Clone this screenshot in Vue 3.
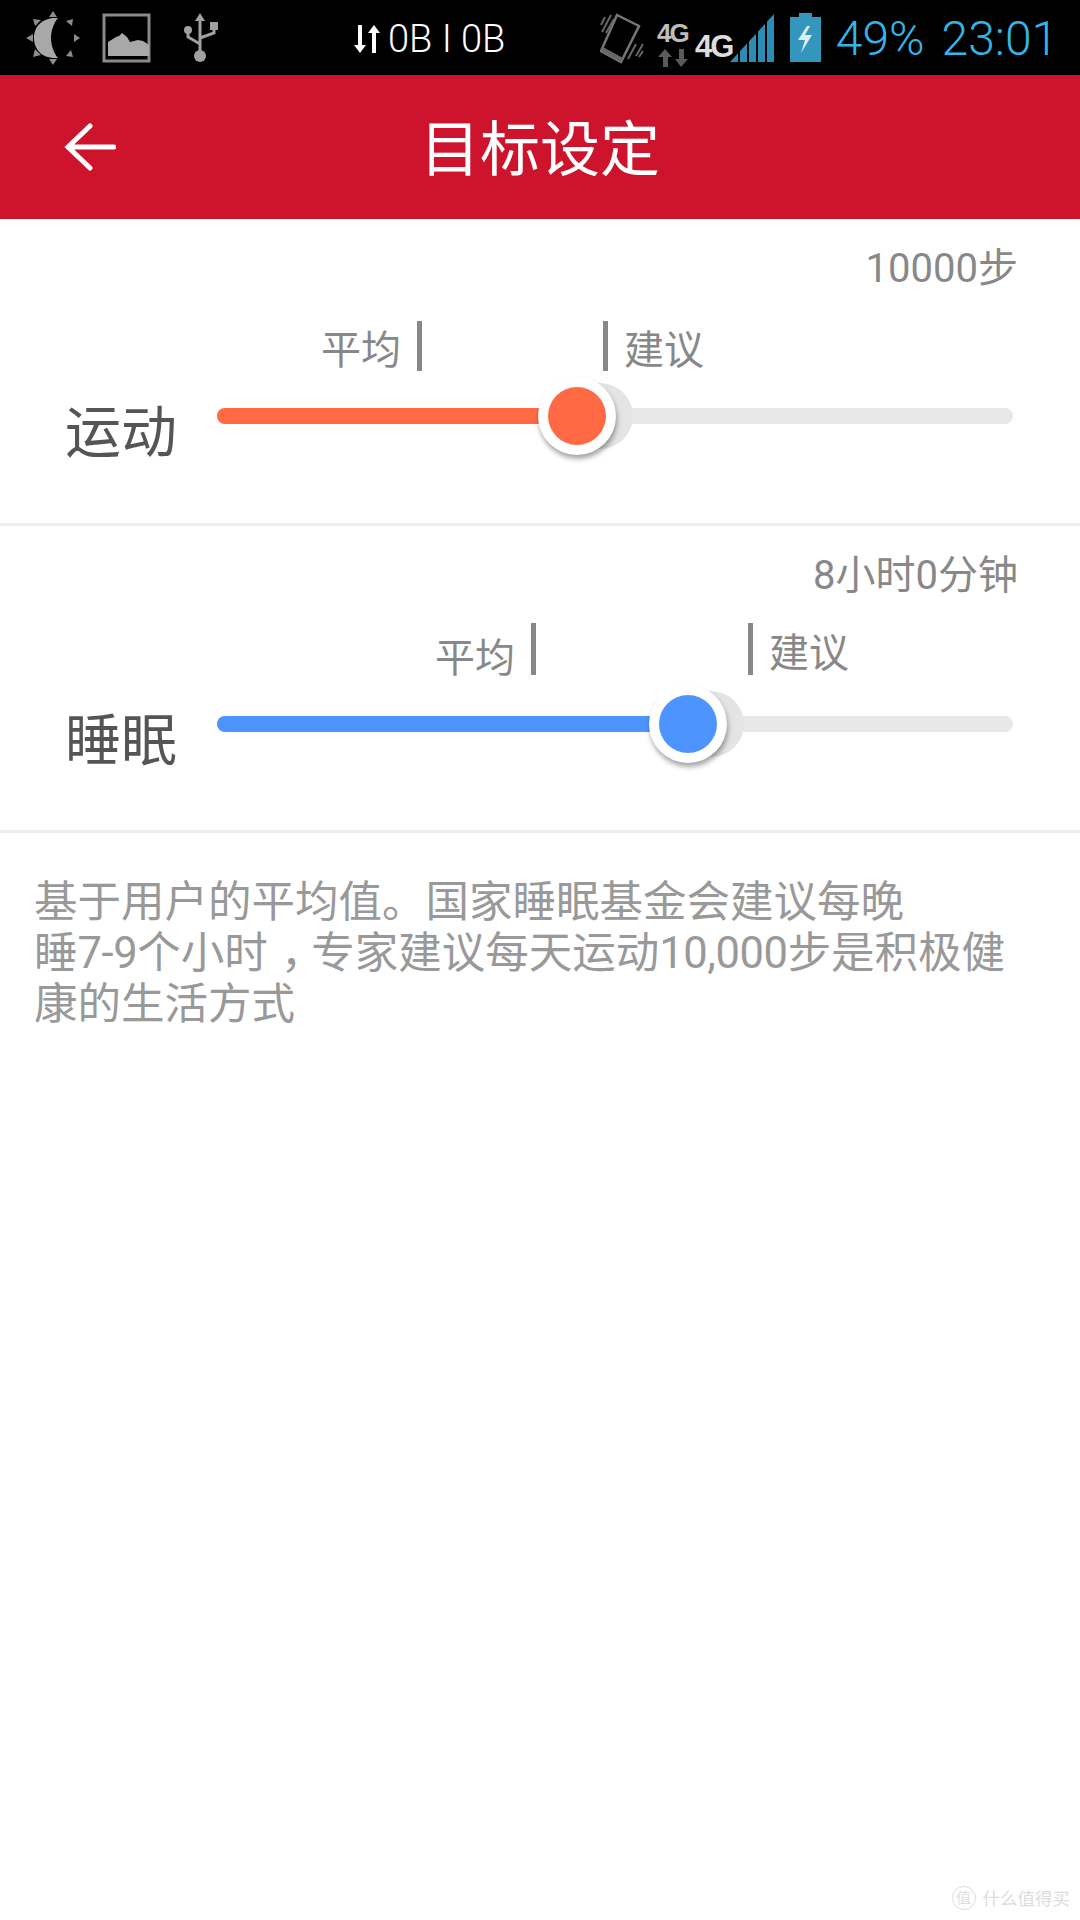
<script setup>
const sliders = [
  { name: '运动', value: '10000步', color: '#ff6a45', pos: 360, avg: 200, rec: 385, marksTop: 32, marksHeight: 50, marksGapBottom: 37, avgDrop: 9, recDrop: 9 },
  { name: '睡眠', value: '8小时0分钟', color: '#4d94ff', pos: 471, avg: 314, rec: 530, marksTop: 27, marksHeight: 52, marksGapBottom: 41, avgDrop: 15, recDrop: 10 }
]
</script>

<template>
  <div class="page">
    <div class="status">
      <div class="left-icons">
        <svg class="ic-sun" width="54" height="54" viewBox="0 0 54 54">
          <path d="M32 7C18 6 8 14 8 27s10 21 24 20c-5-6-7-14-7-20s2-14 7-20z" fill="#a8a8a8" />
          <g fill="#8c8c8c">
            <path d="M27 0l4 6h-8zM27 54l-4-6h8zM0 27l7-4v8zM54 27l-6 4v-8z" />
            <path d="M7 8l8 1-6 6zM47 8l-1 7-6-5zM7 46l2-8 6 6zM47 46l-7-1 5-6z" />
          </g>
        </svg>
        <svg class="ic-img" width="49" height="50" viewBox="0 0 49 50">
          <rect x="2" y="2" width="45" height="46" fill="none" stroke="#8a8a8a" stroke-width="3" />
          <path d="M6 43V29l8-5 3-1 3-3 5 4 3 5 8-2 5 1 6 4v11z" fill="#a8a8a8" />
        </svg>
        <svg class="ic-usb" width="34" height="50" viewBox="0 0 34 50">
          <g stroke="#a0a0a0" stroke-width="3" fill="none">
            <path d="M16 6v34M4 18v6l12 7M30 13v7l-14 5" />
          </g>
          <path d="M16 0l5 8H11z" fill="#a0a0a0" />
          <circle cx="4" cy="17" r="4" fill="#a0a0a0" />
          <rect x="26" y="9" width="8" height="8" fill="#a0a0a0" />
          <circle cx="16" cy="43" r="6" fill="#a0a0a0" />
        </svg>
      </div>
      <div class="net">
        <svg width="26" height="28" viewBox="0 0 26 28">
          <path d="M4 0h4v20h4l-6 8-6-8h4zM18 28h4V8h4l-6-8-6 8h4z" fill="#fff" />
        </svg>
        <span>0B I 0B</span>
      </div>
      <div class="right-icons">
        <svg class="ic-vib" width="46" height="52" viewBox="0 0 46 52">
          <path d="M17 3l22 11-18 36-20-11z" fill="none" stroke="#777" stroke-width="2.5" />
          <path d="M1 39l20 11 2-4-20-11z" fill="#666" />
          <g stroke="#666" stroke-width="2">
            <path d="M2 20L11 3M6 21L14 7M1 13l4-8M28 47l8-15M36 44l7-12M39 45l4-6" />
          </g>
        </svg>
        <div class="g-one">
          <span class="g-text">4G</span>
          <svg width="32" height="18" viewBox="0 0 32 18">
            <path d="M8 0l7 8h-4v10H6V8H1zM24 18l7-8h-4V0h-5v10h-4z" fill="#5a5a5a" />
          </svg>
        </div>
        <span class="g-text g-two">4G</span>
        <svg class="ic-sig" width="44" height="48" viewBox="0 0 44 48">
          <path d="M0 48L44 0v48z" fill="#2b8db5" />
          <g stroke="#000" stroke-width="2">
            <path d="M9 30v18M18 20v28M27 10v38M36 0v48" />
          </g>
        </svg>
        <svg class="ic-bat" width="31" height="49" viewBox="0 0 31 49">
          <path d="M9 0h13v4h9v45H0V4h9z" fill="#3596bd" />
          <path d="M17 13l-9 14h7l-4 13 11-18h-7l5-9z" fill="#dcecf3" />
        </svg>
        <span class="pct">49%</span>
        <span class="clock">23:01</span>
      </div>
    </div>

    <div class="header">
      <svg class="back" width="52" height="48" viewBox="0 0 52 48">
        <path d="M50 24H4M26 3L4 24l22 21" fill="none" stroke="#fff" stroke-width="5" stroke-linecap="round" />
      </svg>
      <h1 class="title">目标设定</h1>
    </div>

    <section v-for="s in sliders" :key="s.name" class="block">
      <div class="value">{{ s.value }}</div>
      <div class="marks" :style="{ marginTop: s.marksTop + 'px', height: s.marksHeight + 'px', marginBottom: s.marksGapBottom + 'px' }">
        <span class="mark-text avg" :style="{ width: s.avg + 'px', paddingTop: s.avgDrop + 'px' }">平均</span>
        <i class="bar"></i>
        <i class="spacer" :style="{ width: s.rec - s.avg - 4 + 'px' }"></i>
        <i class="bar"></i>
        <span class="mark-text rec" :style="{ paddingTop: s.recDrop + 'px' }">建议</span>
      </div>
      <div class="row">
        <div class="name">{{ s.name }}</div>
        <div class="track">
          <div class="fill" :style="{ width: s.pos + 'px', background: s.color }"></div>
          <div class="ghost" :style="{ left: s.pos + 23 + 'px' }"></div>
          <div class="thumb" :style="{ left: s.pos + 'px' }">
            <div class="dot" :style="{ background: s.color }"></div>
          </div>
        </div>
      </div>
    </section>

    <p class="note">基于用户的平均值。国家睡眠基金会建议每晚<br />睡<span class="num">7-9</span>个小时<span class="comma">，</span>专家建议每天运动<span class="num">10,000</span>步是积极健<br />康的生活方式</p>

    <div class="mark-wm">
      <span class="wm-circle">值</span>
      <span>什么值得买</span>
    </div>
  </div>
</template>

<style>
html, body { margin: 0; background: #fff; }
</style>

<style scoped>
.page {
  position: relative;
  width: 1080px;
  height: 1920px;
  overflow: hidden;
  background: #fff;
  font-family: Roboto, "Noto Sans CJK SC", sans-serif;
}
.status {
  display: flex;
  align-items: center;
  height: 75px;
  background: #000;
  position: relative;
}
.left-icons {
  display: flex;
  align-items: center;
  width: 354px;
  padding-left: 26px;
  box-sizing: border-box;
}
.ic-sun { margin-right: 22px; }
.ic-img { margin-right: 33px; }
.net {
  display: flex;
  align-items: center;
  gap: 8px;
  color: #fff;
  font-size: 38px;
  font-weight: 300;
  width: 246px;
  padding-top: 3px;
}
.right-icons {
  display: flex;
  align-items: center;
}
.g-one {
  display: flex;
  flex-direction: column;
  margin-left: 11px;
  line-height: 20px;
  align-self: flex-start;
  margin-top: 15px;
}
.g-one svg { margin-top: 6px; }
.g-text {
  font-size: 26px;
  font-weight: 700;
  color: #bdbdbd;
  letter-spacing: -2px;
  font-family: "Liberation Sans", sans-serif;
}
.g-two {
  color: #ddd;
  font-size: 31px;
  margin-left: 6px;
  margin-top: 18px;
}
.ic-sig { margin-left: -2.5px; }
.ic-bat { margin-left: 16px; }
.pct, .clock {
  color: #33b5e5;
  font-size: 48px;
  font-weight: 300;
  padding-top: 1px;
}
.pct { margin-left: 15px; }
.clock { margin-left: 17px; }
.header {
  display: flex;
  align-items: center;
  justify-content: center;
  position: relative;
  height: 144px;
  background: #cd142c;
}
.back {
  position: absolute;
  left: 64px;
  top: 48px;
}
.title {
  margin: 0 0 6px 0;
  color: #fff;
  font-size: 60px;
  font-weight: 400;
}
.block {
  height: 304px;
  border-bottom: 3px solid #eee;
}
.value {
  height: 40px;
  padding-top: 30px;
  padding-right: 62px;
  text-align: right;
  font-size: 40px;
  line-height: 40px;
  color: #888;
}
.marks {
  display: flex;
  align-items: stretch;
  padding-left: 217px;
}
.mark-text {
  font-size: 40px;
  line-height: 42px;
  color: #888;
  white-space: nowrap;
  box-sizing: border-box;
}
.avg {
  text-align: right;
  padding-right: 16px;
}
.rec { padding-left: 16px; }
.bar {
  width: 5px;
  background: #888;
  flex: none;
}
.spacer { flex: none; }
.row {
  display: flex;
  padding-left: 65px;
}
.name {
  width: 152px;
  font-size: 56px;
  line-height: 64px;
  color: #555;
  margin-top: -7px;
}
.track {
  position: relative;
  width: 796px;
  height: 16px;
  border-radius: 8px;
  background: #e8e8e8;
}
.fill {
  height: 16px;
  border-radius: 8px 0 0 8px;
}
.ghost {
  position: absolute;
  top: 8px;
  width: 66px;
  height: 66px;
  margin: -33px 0 0 -33px;
  border-radius: 50%;
  background: #e4e4e4;
}
.thumb {
  position: absolute;
  top: 8px;
  width: 78px;
  height: 78px;
  margin: -39px 0 0 -39px;
  border-radius: 50%;
  background: #fff;
  box-shadow: 1px 4px 5px rgba(0, 0, 0, 0.35);
  display: flex;
  align-items: center;
  justify-content: center;
}
.dot {
  width: 58px;
  height: 58px;
  border-radius: 50%;
}
.note {
  margin: 44px 0 0;
  padding-left: 34px;
  font-size: 43.5px;
  line-height: 51px;
  color: #999;
  white-space: nowrap;
}
.num { letter-spacing: -0.4px; }
.comma {
  margin-left: 0.3em;
  letter-spacing: -0.3em;
}
.mark-wm {
  position: absolute;
  right: 10px;
  bottom: 10px;
  display: flex;
  align-items: center;
  gap: 7px;
  font-size: 17.5px;
  color: #ddd;
}
.wm-circle {
  width: 22px;
  height: 22px;
  border: 1px solid #ddd;
  border-radius: 50%;
  font-size: 15px;
  line-height: 22px;
  text-align: center;
}
</style>
